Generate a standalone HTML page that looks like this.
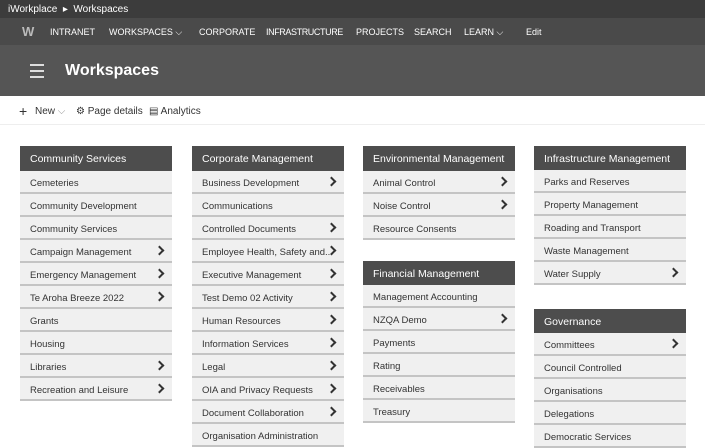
<!DOCTYPE html><html><head><style>
*{margin:0;padding:0;box-sizing:border-box}
body{width:705px;height:440px;overflow:hidden;background:#fff;font-family:"Liberation Sans",sans-serif;position:relative}
.top{position:absolute;left:0;top:0;width:705px;height:18px;background:#3c3c3c;color:#fff;font-size:10px;line-height:19px;padding-left:8px}
.nav{position:absolute;left:0;top:18px;width:705px;height:27px;background:#4a4a4a;color:#fff;font-size:9px;line-height:28px}
.nav span{position:absolute;top:0}
.hdr{position:absolute;left:0;top:45px;width:705px;height:51px;background:#555;color:#fff}
.cmd{position:absolute;left:0;top:96px;width:705px;height:29px;border-bottom:1px solid #eee;font-size:10px;color:#333;line-height:31px}
.col{position:absolute;width:152px}
.h{background:#4d4d4d;color:#fff;font-size:10.5px;height:24px;line-height:27px;padding-left:10px}
.r{background:#f0f0f0;border-bottom:2px solid #c4c4c4;height:23px;line-height:25px;font-size:9.5px;color:#333;padding-left:10px;position:relative;white-space:nowrap;overflow:hidden}
.r.a::after{content:"";position:absolute;right:9px;top:7px;width:5px;height:5px;border-right:2.5px solid #333;border-top:2.5px solid #333;transform:rotate(45deg)}
</style></head><body>
<div class="top">iWorkplace &nbsp;▸&nbsp; Workspaces</div>
<div class="nav">
<span style="left:22px;font-weight:bold;font-size:13px;color:#bbb">W</span>
<span style="left:50px">INTRANET</span>
<span style="left:109px">WORKSPACES ⌵</span>
<span style="left:199px">CORPORATE</span>
<span style="left:266px;letter-spacing:-0.4px">INFRASTRUCTURE</span>
<span style="left:356px">PROJECTS</span>
<span style="left:414px">SEARCH</span>
<span style="left:464px">LEARN ⌵</span>
<span style="left:526px">Edit</span>
</div>
<div class="hdr">
<div style="position:absolute;left:27px;top:19px;width:17px">
<div style="height:2px;background:#ddd;margin-bottom:4px;margin-left:3px"></div><div style="height:2px;background:#ddd;margin-bottom:4px;margin-left:3px"></div><div style="height:2px;background:#ddd;margin-left:3px"></div></div>
<div style="position:absolute;left:65px;top:17px;font-size:16px;font-weight:bold">Workspaces</div>
</div>
<div class="cmd"><span style="position:absolute;left:19px;font-size:14px">+</span><span style="position:absolute;left:35px">New <span style="color:#999">⌵</span></span><span style="position:absolute;left:76px">⚙ Page details</span><span style="position:absolute;left:149px">▤ Analytics</span></div>

<div class="col" style="left:20px;top:146px"><div class="h" style="height:25px">Community Services</div>
<div class="r">Cemeteries</div><div class="r">Community Development</div><div class="r">Community Services</div><div class="r a">Campaign Management</div><div class="r a">Emergency Management</div><div class="r a">Te Aroha Breeze 2022</div><div class="r">Grants</div><div class="r">Housing</div><div class="r a">Libraries</div><div class="r a">Recreation and Leisure</div></div>

<div class="col" style="left:192px;top:146px"><div class="h" style="height:25px">Corporate Management</div>
<div class="r a">Business Development</div><div class="r">Communications</div><div class="r a">Controlled Documents</div><div class="r a">Employee Health, Safety and...</div><div class="r a">Executive Management</div><div class="r a">Test Demo 02 Activity</div><div class="r a">Human Resources</div><div class="r a">Information Services</div><div class="r a">Legal</div><div class="r a">OIA and Privacy Requests</div><div class="r a">Document Collaboration</div><div class="r">Organisation Administration</div></div>

<div class="col" style="left:363px;top:146px"><div class="h" style="height:25px">Environmental Management</div>
<div class="r a">Animal Control</div><div class="r a">Noise Control</div><div class="r">Resource Consents</div></div>

<div class="col" style="left:363px;top:261px"><div class="h">Financial Management</div>
<div class="r">Management Accounting</div><div class="r a">NZQA Demo</div><div class="r">Payments</div><div class="r">Rating</div><div class="r">Receivables</div><div class="r">Treasury</div></div>

<div class="col" style="left:534px;top:146px"><div class="h">Infrastructure Management</div>
<div class="r">Parks and Reserves</div><div class="r">Property Management</div><div class="r">Roading and Transport</div><div class="r">Waste Management</div><div class="r a">Water Supply</div></div>

<div class="col" style="left:534px;top:309px"><div class="h">Governance</div>
<div class="r a">Committees</div><div class="r">Council Controlled</div><div class="r">Organisations</div><div class="r">Delegations</div><div class="r">Democratic Services</div></div>
</body></html>
